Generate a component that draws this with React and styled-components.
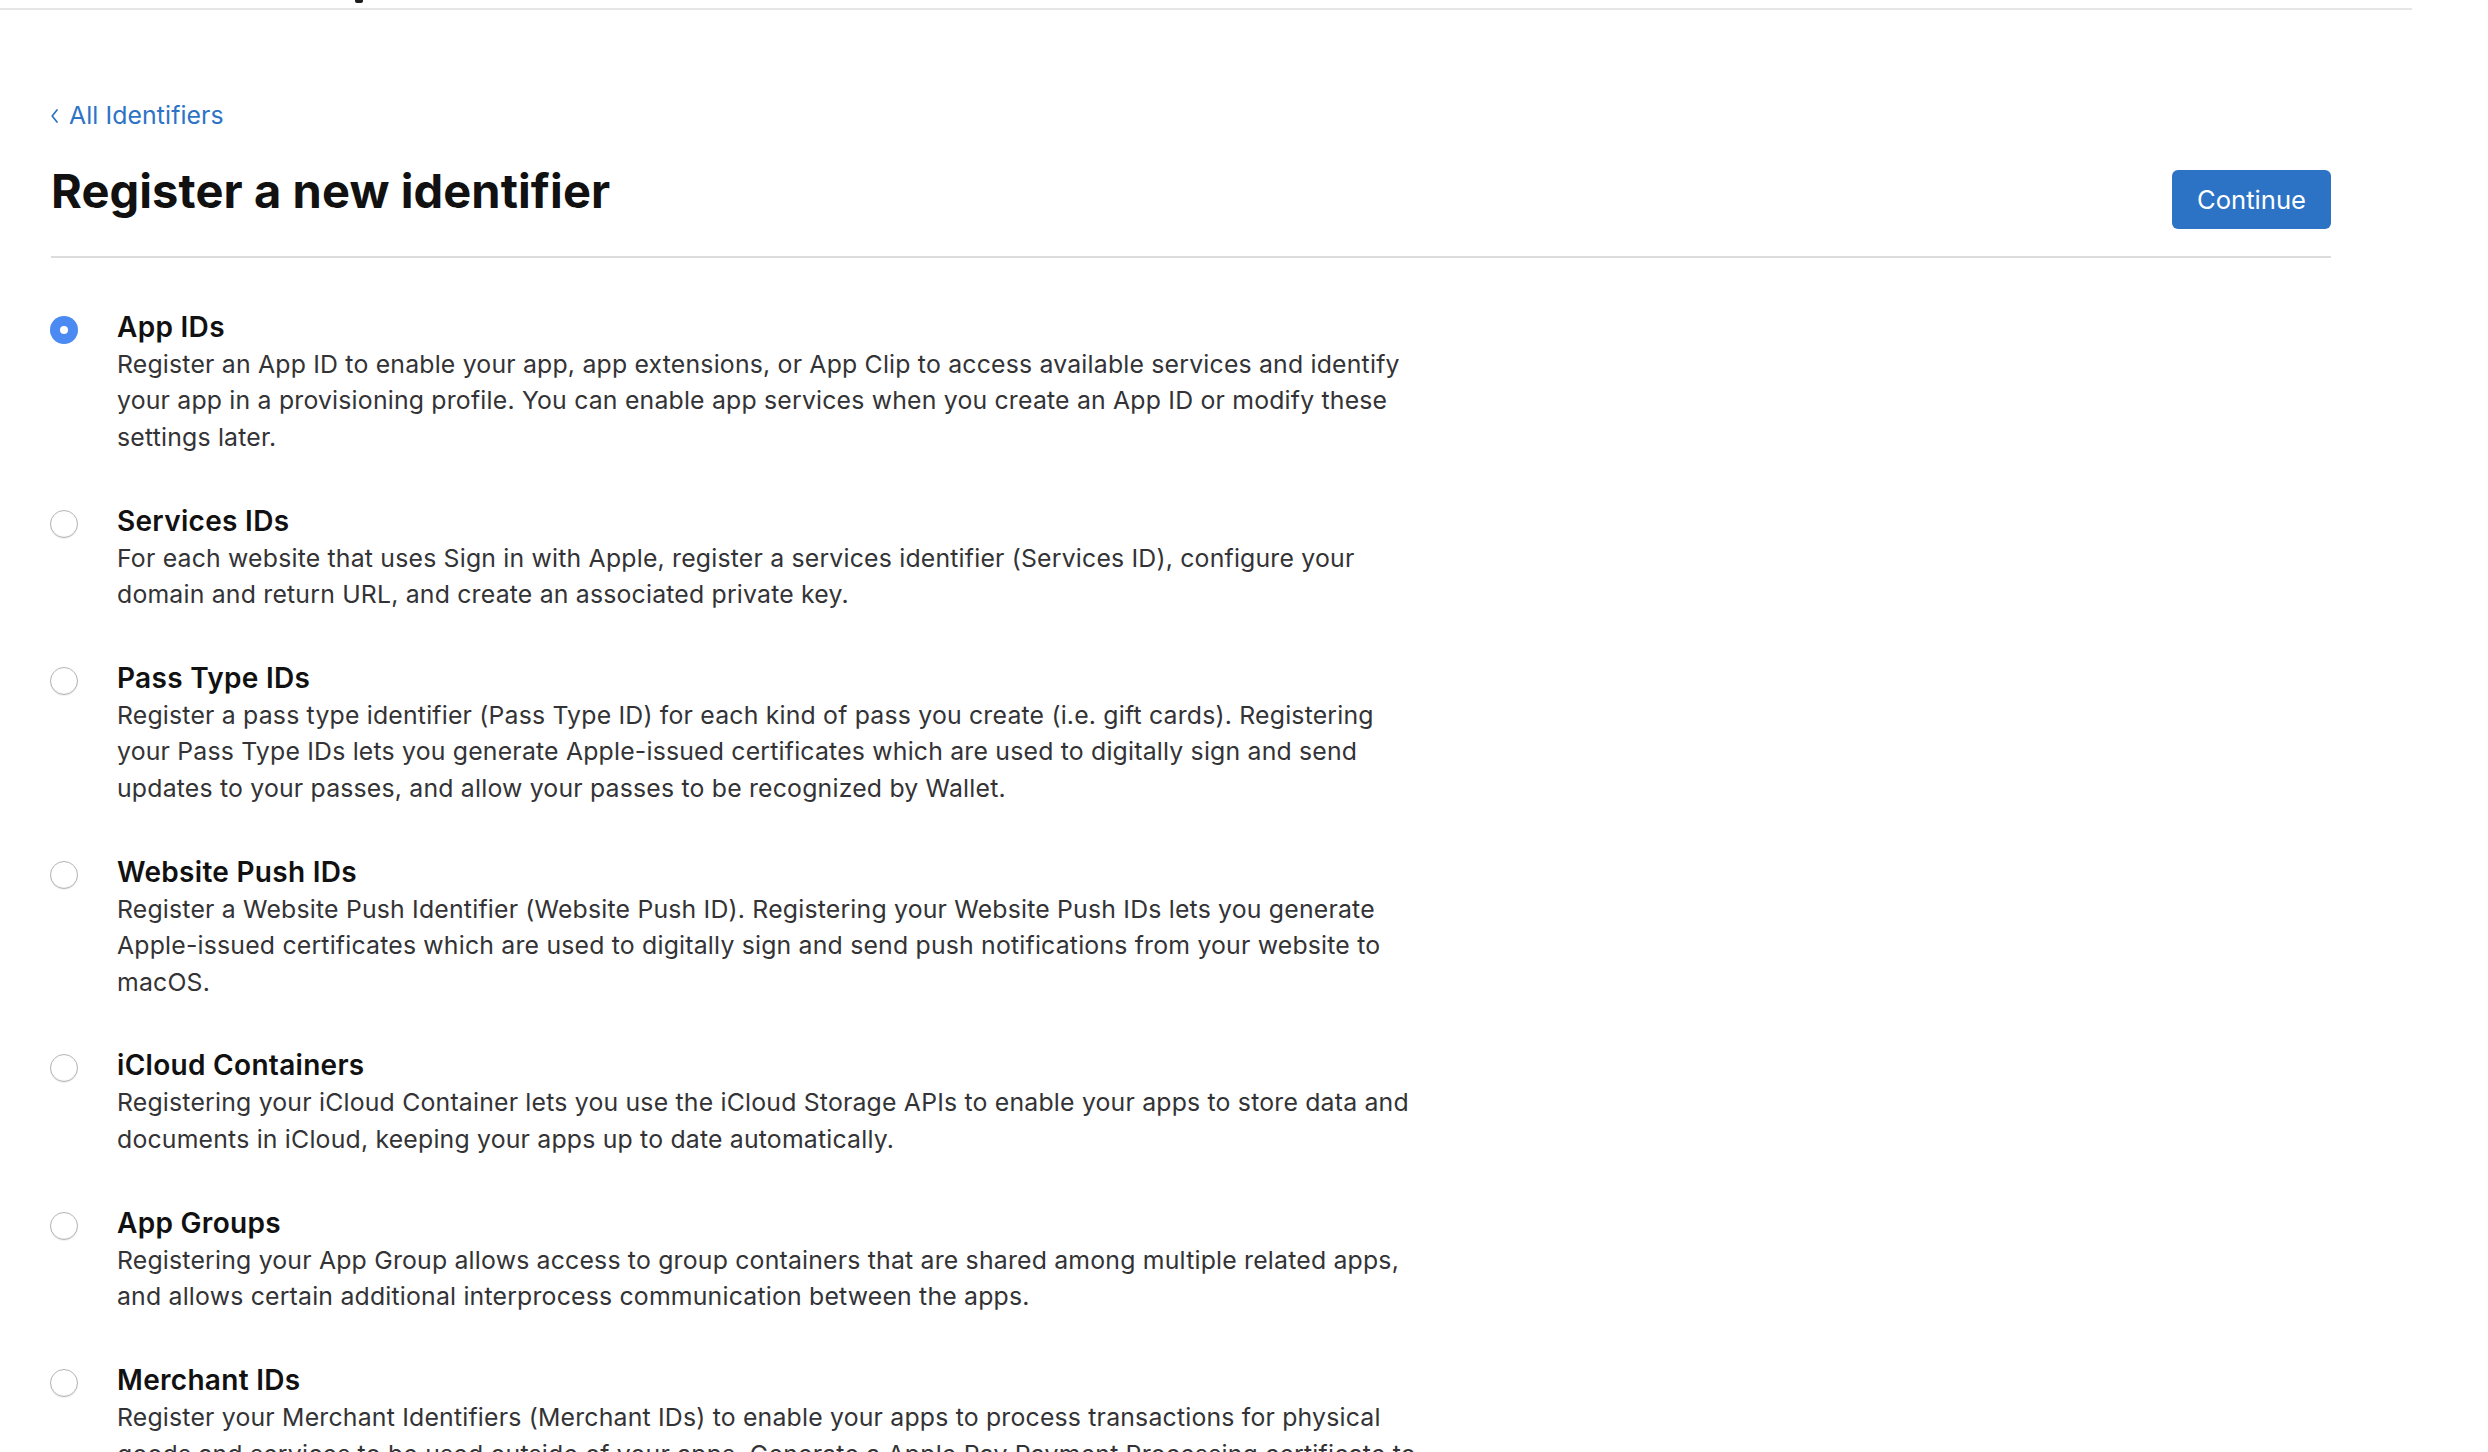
import React from "react";
import styled, { createGlobalStyle } from "styled-components";

const GlobalStyle = createGlobalStyle`
  html, body { margin: 0; padding: 0; background: #ffffff; }
  body {
    font-family: Inter, "Noto Sans", "Liberation Sans", sans-serif;
    color: #1d1d1f;
    -webkit-font-smoothing: antialiased;
  }
`;

const Page = styled.div`
  width: 2488px;
  min-height: 1452px;
  overflow: hidden;
`;

const TopBar = styled.div`
  width: 2412px;
  height: 8px;
  border-bottom: 2px solid #e6e6e6;
  display: flex;
  align-items: flex-start;
`;

const NavTail = styled.span`
  display: block;
  width: 8px;
  height: 3px;
  margin-left: 355px;
  background: #1d1d1f;
  border-radius: 0 0 2px 2px;
`;

const Main = styled.main`
  width: 2280px;
  padding-left: 51px;
`;

const BackLink = styled.a`
  display: inline-flex;
  align-items: center;
  gap: 11px;
  margin-top: 87px;
  font-size: 24.8px;
  line-height: 36px;
  letter-spacing: 0.1px;
  color: #2d73c6;
  text-decoration: none;
  cursor: pointer;
  svg { margin-top: 2px; }
`;

const HeaderRow = styled.div`
  display: flex;
  justify-content: space-between;
  align-items: flex-start;
  margin-top: 30px;
  padding-bottom: 27px;
  border-bottom: 2px solid #dcdcdc;
`;

const Title = styled.h1`
  margin: 0;
  font-size: 47px;
  line-height: 56px;
  font-weight: 700;
  letter-spacing: 0.1px;
  color: #111112;
`;

const PrimaryButton = styled.button`
  margin-top: 7px;
  width: 159px;
  height: 59px;
  border: none;
  border-radius: 6px;
  background: #2c73c6;
  color: #ffffff;
  font-family: inherit;
  font-size: 25.6px;
  font-weight: 400;
  cursor: pointer;
`;

const List = styled.div`
  display: flex;
  flex-direction: column;
  gap: 47.5px;
  margin-top: 51px;
`;

const Item = styled.label`
  display: grid;
  grid-template-columns: 66px 1305px;
  align-items: start;
  cursor: pointer;
`;

const Radio = styled.span`
  box-sizing: border-box;
  width: 28px;
  height: 28px;
  margin-top: 7px;
  margin-left: -1px;
  border-radius: 50%;
  display: flex;
  align-items: center;
  justify-content: center;
  background: ${(p) => (p.$checked ? "#4a8af2" : "#ffffff")};
  border: ${(p) => (p.$checked ? "none" : "1.5px solid #b4b4b4")};
  box-shadow: ${(p) =>
    p.$checked ? "none" : "inset 0 -1px 1px rgba(0,0,0,0.05), 0 1px 1px rgba(0,0,0,0.06)"};

  &::after {
    content: "";
    display: ${(p) => (p.$checked ? "block" : "none")};
    width: 8px;
    height: 8px;
    border-radius: 50%;
    background: #ffffff;
  }
`;

const ItemText = styled.div`
  display: flex;
  flex-direction: column;
`;

const ItemTitle = styled.div`
  font-size: 28px;
  line-height: 36px;
  font-weight: 600;
  letter-spacing: 0.3px;
  color: #111112;
`;

const ItemDesc = styled.p`
  margin: 1px 0 0;
  font-size: 24.8px;
  line-height: 36.4px;
  letter-spacing: 0.2px;
  color: #333336;
`;

const items = [
  {
    title: "App IDs",
    desc: "Register an App ID to enable your app, app extensions, or App Clip to access available services and identify your app in a provisioning profile. You can enable app services when you create an App ID or modify these settings later.",
  },
  {
    title: "Services IDs",
    desc: "For each website that uses Sign in with Apple, register a services identifier (Services ID), configure your domain and return URL, and create an associated private key.",
  },
  {
    title: "Pass Type IDs",
    desc: "Register a pass type identifier (Pass Type ID) for each kind of pass you create (i.e. gift cards). Registering your Pass Type IDs lets you generate Apple-issued certificates which are used to digitally sign and send updates to your passes, and allow your passes to be recognized by Wallet.",
  },
  {
    title: "Website Push IDs",
    desc: "Register a Website Push Identifier (Website Push ID). Registering your Website Push IDs lets you generate Apple-issued certificates which are used to digitally sign and send push notifications from your website to macOS.",
  },
  {
    title: "iCloud Containers",
    desc: "Registering your iCloud Container lets you use the iCloud Storage APIs to enable your apps to store data and documents in iCloud, keeping your apps up to date automatically.",
  },
  {
    title: "App Groups",
    desc: "Registering your App Group allows access to group containers that are shared among multiple related apps, and allows certain additional interprocess communication between the apps.",
  },
  {
    title: "Merchant IDs",
    desc: "Register your Merchant Identifiers (Merchant IDs) to enable your apps to process transactions for physical goods and services to be used outside of your apps. Generate a Apple Pay Payment Processing certificate to encrypt transaction data.",
  },
];

const Chevron = () => (
  <svg width="7" height="14" viewBox="0 0 7 14" fill="none">
    <polyline
      points="6,1 1.2,7 6,13"
      stroke="#2d73c6"
      strokeWidth="1.7"
      strokeLinecap="round"
      strokeLinejoin="round"
    />
  </svg>
);

export default function App() {
  const [selected, setSelected] = React.useState(0);
  return (
    <Page>
      <GlobalStyle />
      <TopBar>
        <NavTail />
      </TopBar>
      <Main>
        <BackLink>
          <Chevron />
          All Identifiers
        </BackLink>
        <HeaderRow>
          <Title>Register a new identifier</Title>
          <PrimaryButton>Continue</PrimaryButton>
        </HeaderRow>
        <List>
          {items.map((it, i) => (
            <Item key={it.title} onClick={() => setSelected(i)}>
              <Radio $checked={selected === i} />
              <ItemText>
                <ItemTitle>{it.title}</ItemTitle>
                <ItemDesc>{it.desc}</ItemDesc>
              </ItemText>
            </Item>
          ))}
        </List>
      </Main>
    </Page>
  );
}
